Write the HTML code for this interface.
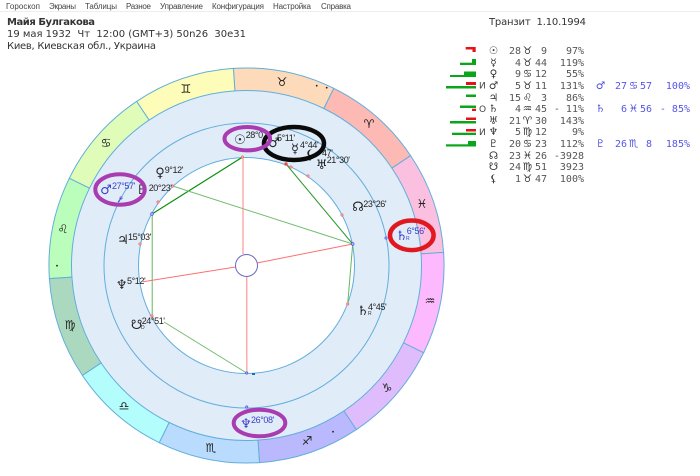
<!DOCTYPE html>
<html lang="ru"><head><meta charset="utf-8"><title>Майя Булгакова</title>
<style>
html,body{margin:0;padding:0;background:#fff;width:700px;height:476px;overflow:hidden}
svg{display:block;filter:blur(.3px)}
text{font-family:"Liberation Sans",sans-serif}
.m{font-size:8px;fill:#444}
.h{font-family:"DejaVu Sans",sans-serif;font-size:10px;fill:#333}
.z{font-family:"DejaVu Sans",sans-serif;font-size:12px;fill:#222;text-anchor:middle}
.g{font-family:"DejaVu Sans",sans-serif;font-size:13px;fill:#222;text-anchor:middle}
.gb{font-family:"DejaVu Sans",sans-serif;font-size:13px;fill:#3c3cc8;text-anchor:middle}
.l{font-size:9px;letter-spacing:-.4px;fill:#222}
.lb{font-size:9px;letter-spacing:-.4px;fill:#3c3cc8}
.r{font-size:5px;fill:#333}
.t text{font-family:"DejaVu Sans Mono",monospace;font-size:10px;fill:#555}
.t text.s{font-family:"DejaVu Sans",sans-serif;font-size:10.5px;text-anchor:middle;fill:#333}
.t text.e{text-anchor:end}
.b text{font-family:"DejaVu Sans Mono",monospace;font-size:10px;fill:#5555e8}
.b text.s{font-family:"DejaVu Sans",sans-serif;font-size:10.5px;text-anchor:middle;fill:#4a4ae0}
.b text.e{text-anchor:end}
</style></head><body>
<svg width="700" height="476" viewBox="0 0 700 476" xmlns="http://www.w3.org/2000/svg">
<rect width="700" height="476" fill="#fff"/>
<rect x="0" y="11" width="700" height="1" fill="#eee"/>
<text class="m" x="6" y="9" textLength="34">Гороскоп</text>
<text class="m" x="49" y="9" textLength="27">Экраны</text>
<text class="m" x="85" y="9" textLength="32">Таблицы</text>
<text class="m" x="126" y="9" textLength="25">Разное</text>
<text class="m" x="160" y="9" textLength="43">Управление</text>
<text class="m" x="212" y="9" textLength="52">Конфигурация</text>
<text class="m" x="273" y="9" textLength="38">Настройка</text>
<text class="m" x="321" y="9" textLength="30">Справка</text>

<text class="h" x="7" y="25" style="font-weight:700" textLength="88">Майя Булгакова</text>
<text class="h" x="7" y="37" xml:space="preserve" textLength="239">19 мая 1932  Чт  12:00 (GMT+3) 50n26  30e31</text>
<text class="h" x="7" y="49" textLength="149">Киев, Киевская обл., Украина</text>
<text class="h" x="489" y="25" xml:space="preserve" textLength="97">Транзит  1.10.1994</text>

<!-- zodiac wheel -->
<circle cx="246.5" cy="265.5" r="175" fill="#e1ecf9"/>
<g stroke="#62aedb" stroke-width="1">
<path fill="#fbbfdf" d="M443.6 252.4A197.5 197.5 0 0 0 410.6 155.6L391.9 168.1A175 175 0 0 1 421.1 253.9Z"/>
<path fill="#fdb9b3" d="M410.6 155.6A197.5 197.5 0 0 0 333.7 88.3L323.8 108.5A175 175 0 0 1 391.9 168.1Z"/>
<path fill="#fddbba" d="M333.7 88.3A197.5 197.5 0 0 0 233.4 68.4L234.9 90.9A175 175 0 0 1 323.8 108.5Z"/>
<path fill="#fdfdb9" d="M233.4 68.4A197.5 197.5 0 0 0 136.6 101.4L149.1 120.1A175 175 0 0 1 234.9 90.9Z"/>
<path fill="#dffdb9" d="M136.6 101.4A197.5 197.5 0 0 0 69.3 178.3L89.5 188.2A175 175 0 0 1 149.1 120.1Z"/>
<path fill="#bbfdbb" d="M69.3 178.3A197.5 197.5 0 0 0 49.4 278.6L71.9 277.1A175 175 0 0 1 89.5 188.2Z"/>
<path fill="#abd9bf" d="M49.4 278.6A197.5 197.5 0 0 0 82.4 375.4L101.1 362.9A175 175 0 0 1 71.9 277.1Z"/>
<path fill="#b3fdfd" d="M82.4 375.4A197.5 197.5 0 0 0 159.3 442.7L169.2 422.5A175 175 0 0 1 101.1 362.9Z"/>
<path fill="#b9dbfd" d="M159.3 442.7A197.5 197.5 0 0 0 259.6 462.6L258.1 440.1A175 175 0 0 1 169.2 422.5Z"/>
<path fill="#bbb9fd" d="M259.6 462.6A197.5 197.5 0 0 0 356.4 429.6L343.9 410.9A175 175 0 0 1 258.1 440.1Z"/>
<path fill="#dfbdfd" d="M356.4 429.6A197.5 197.5 0 0 0 423.7 352.7L403.5 342.8A175 175 0 0 1 343.9 410.9Z"/>
<path fill="#fdb9fd" d="M423.7 352.7A197.5 197.5 0 0 0 443.6 252.4L421.1 253.9A175 175 0 0 1 403.5 342.8Z"/>
</g>
<circle cx="246.5" cy="265.5" r="142.5" fill="none" stroke="#62aedb" stroke-width="1"/>
<circle cx="246.5" cy="265.5" r="108" fill="#fff" stroke="#62aedb" stroke-width="1"/>

<!-- aspects -->
<g fill="none">
<path d="M242.3 157.3L152 214" stroke="#0a8f0a" stroke-width="1.2"/>
<path d="M152.2 214V316" stroke="#60b860" stroke-width="1"/>
<path d="M164 322L246.7 373" stroke="#70bc70" stroke-width="1"/>
<path d="M352.7 244L286 164" stroke="#2f9a2f" stroke-width="1"/>
<path d="M352.7 244L172.7 186" stroke="#70bc70" stroke-width="1"/>
<path d="M352.7 244L347.7 304" stroke="#60b860" stroke-width="1"/>
<path d="M243 157V254" stroke="#ff8080" stroke-width="1"/>
<path d="M243 157V172" stroke="#ffb0b0" stroke-width="1.6"/>
<path d="M257 263L352.7 244" stroke="#ff7070" stroke-width="1"/>
<path d="M235.5 267L143 281.7" stroke="#ff7070" stroke-width="1"/>
<path d="M246.8 277V373" stroke="#ff8080" stroke-width="1"/>
<path d="M246.8 355V372" stroke="#ffb0b0" stroke-width="1.6"/>
</g>
<circle cx="246.5" cy="265.5" r="11" fill="#fff" stroke="#6a6ac0" stroke-width="1"/>

<!-- markers -->
<g fill="#ffb0b0" stroke="#f06060" stroke-width=".6">
<circle cx="158" cy="202" r="1.2"/><circle cx="172.7" cy="186" r="1.2"/><circle cx="140" cy="244" r="1.2"/><circle cx="152" cy="316" r="1.2"/>
<circle cx="291" cy="167" r="1.2"/><circle cx="308" cy="176" r="1.2"/><circle cx="342" cy="215" r="1.2"/><circle cx="347.7" cy="304" r="1.2"/>
<circle cx="286" cy="164" r="1.5" fill="#f04040"/><circle cx="242.5" cy="157" r="1.2"/>
</g>
<g fill="#aab0ff" stroke="#4a4ae0" stroke-width=".6">
<circle cx="352.7" cy="244" r="1.4"/><circle cx="152" cy="214" r="1.4"/><circle cx="246.7" cy="373" r="1.2"/>
<circle cx="121" cy="198" r="1.2"/><circle cx="386" cy="238" r="1.2"/><circle cx="246.7" cy="407" r="1.2"/>
</g>
<rect x="252" y="373" width="3" height="2" fill="#1b6fb5"/>

<!-- sign glyphs -->
<text class="z" x="186" y="93">♊</text>
<text class="z" x="282" y="86">♉</text>
<text class="z" x="369" y="128">♈</text>
<text class="z" x="422" y="208">♓</text>
<text class="z" x="430" y="305">♒</text>
<text class="z" x="387" y="392">♑</text>
<text class="z" x="307" y="445">♐</text>
<text class="z" x="211" y="452">♏</text>
<text class="z" x="124" y="410">♎</text>
<text class="z" x="70" y="329">♍</text>
<text class="z" x="63" y="233">♌</text>
<text class="z" x="106" y="147">♋</text>
<g fill="#222"><circle cx="316.7" cy="85.7" r=".9"/><circle cx="326.7" cy="87.7" r=".9"/><circle cx="333" cy="431.7" r=".9"/><circle cx="57" cy="265.7" r=".9"/></g>

<!-- natal planets -->
<text class="g" x="240" y="144">☉</text><text class="l" x="245.7" y="138">28°0</text>
<text class="g" x="274" y="147">♂</text><text class="l" x="277" y="141">5°11'</text>
<text class="g" x="295" y="153">☿</text><text class="l" x="300" y="148">4°44'</text>
<text class="g" x="310" y="159">⚸</text><text class="l" x="322" y="156">47'</text>
<text class="g" x="321.7" y="169">♅</text><text class="l" x="326.7" y="163">21°30'</text>
<text class="g" x="358" y="211">☊</text><text class="l" x="363.3" y="207">23°26'</text>
<text class="g" x="363" y="315">♄</text><text class="r" x="368" y="315">R</text><text class="l" x="368" y="310">4°45'</text>
<text class="g" x="160" y="177">♀</text><text class="l" x="164.7" y="173">9°12'</text>
<text class="g" x="142" y="194">♇</text><text class="l" x="148.7" y="191">20°23'</text>
<text class="g" x="123" y="244">♃</text><text class="l" x="128" y="240">15°03'</text>
<text class="g" x="121.7" y="289">♆</text><text class="l" x="127" y="284">5°12'</text>
<text class="g" x="136.7" y="329">☋</text><text class="r" x="141" y="329">D</text><text class="l" x="141.7" y="324">24°51'</text>

<!-- transit planets -->
<text class="gb" x="401.7" y="240">♄</text><text class="r" x="406" y="240" style="fill:#3c3cc8">R</text><text class="lb" x="406.7" y="234">6°56'</text>
<text class="gb" x="246" y="428">♆</text><text class="lb" x="251" y="423">26°08'</text>
<text class="gb" x="106" y="194">♂</text><text class="lb" x="112" y="189">27°57'</text>
<path d="M121 198L118 202" stroke="#3c3cc8" stroke-width=".8"/>

<!-- ellipses -->
<g fill="none">
<ellipse cx="294" cy="143.5" rx="30" ry="16.5" stroke="#0a0a0a" stroke-width="4.5"/>
<ellipse cx="247.3" cy="138.7" rx="22.8" ry="11.7" stroke="#a83cb0" stroke-width="4"/>
<ellipse cx="120" cy="189.5" rx="24.7" ry="15.2" stroke="#a83cb0" stroke-width="4"/>
<ellipse cx="259.5" cy="423" rx="25.8" ry="13.3" stroke="#a83cb0" stroke-width="4"/>
<ellipse cx="411.8" cy="235.3" rx="21.8" ry="14.8" stroke="#e0181f" stroke-width="4.5"/>
</g>

<!-- bars -->
<g fill="#e8101a">
<rect x="465.7" y="47" width="10" height="2.5"/><rect x="472.5" y="49.5" width="3.2" height="2.5"/>
<rect x="466" y="82" width="10" height="3"/><rect x="472" y="108.7" width="4" height="2.3"/>
<rect x="466" y="117.5" width="10" height="2.5"/><rect x="466" y="129" width="10" height="2.5"/>
</g>
<g fill="#0aa51a">
<rect x="460" y="62.7" width="16" height="2.3"/><rect x="472" y="59" width="4" height="4"/>
<rect x="450" y="75" width="26" height="2"/><rect x="464" y="71.5" width="12" height="3.5"/>
<rect x="446" y="86" width="30" height="2.5"/>
<rect x="466" y="94.5" width="10" height="2.5"/>
<rect x="460" y="105.5" width="16" height="2.5"/>
<rect x="450" y="121" width="26" height="2.5"/>
<rect x="452" y="132.7" width="24" height="2.3"/>
<rect x="446" y="144.3" width="30" height="2.2"/><rect x="468" y="141" width="8" height="3.5"/>
</g>
<text x="479" y="88.5" font-size="9" fill="#444" style="font-family:'DejaVu Sans',sans-serif">И</text>
<text x="479" y="112" font-size="9" fill="#444" style="font-family:'DejaVu Sans',sans-serif">О</text>
<text x="479" y="135" font-size="9" fill="#444" style="font-family:'DejaVu Sans',sans-serif">И</text>

<!-- table -->
<g class="t">
<text class="s" x="493.5" y="54">☉</text><text class="e" x="521" y="54">28</text><text class="s" x="527.5" y="54">♉</text><text class="e" x="547" y="54">9</text><text class="e" x="584" y="54">97%</text>
<text class="s" x="493.5" y="66">☿</text><text class="e" x="521" y="66">4</text><text class="s" x="527.5" y="66">♉</text><text class="e" x="547" y="66">44</text><text class="e" x="584" y="66">119%</text>
<text class="s" x="493.5" y="77">♀</text><text class="e" x="521" y="77">9</text><text class="s" x="527.5" y="77">♋</text><text class="e" x="547" y="77">12</text><text class="e" x="584" y="77">55%</text>
<text class="s" x="493.5" y="89">♂</text><text class="e" x="521" y="89">5</text><text class="s" x="527.5" y="89">♉</text><text class="e" x="547" y="89">11</text><text class="e" x="584" y="89">131%</text>
<text class="s" x="493.5" y="101">♃</text><text class="e" x="521" y="101">15</text><text class="s" x="527.5" y="101">♌</text><text class="e" x="547" y="101">3</text><text class="e" x="584" y="101">86%</text>
<text class="s" x="493.5" y="112">♄</text><text class="e" x="521" y="112">4</text><text class="s" x="527.5" y="112">♒</text><text class="e" x="547" y="112">45</text><text class="e" x="584" y="112" xml:space="preserve">- 11%</text>
<text class="s" x="493.5" y="124">♅</text><text class="e" x="521" y="124">21</text><text class="s" x="527.5" y="124">♈</text><text class="e" x="547" y="124">30</text><text class="e" x="584" y="124">143%</text>
<text class="s" x="493.5" y="135">♆</text><text class="e" x="521" y="135">5</text><text class="s" x="527.5" y="135">♍</text><text class="e" x="547" y="135">12</text><text class="e" x="584" y="135">9%</text>
<text class="s" x="493.5" y="147">♇</text><text class="e" x="521" y="147">20</text><text class="s" x="527.5" y="147">♋</text><text class="e" x="547" y="147">23</text><text class="e" x="584" y="147">112%</text>
<text class="s" x="493.5" y="159">☊</text><text class="e" x="521" y="159">23</text><text class="s" x="527.5" y="159">♓</text><text class="e" x="547" y="159">26</text><text class="e" x="584" y="159">-3928</text>
<text class="s" x="493.5" y="170">☋</text><text class="e" x="521" y="170">24</text><text class="s" x="527.5" y="170">♍</text><text class="e" x="547" y="170">51</text><text class="e" x="584" y="170">3923</text>
<text class="s" x="493.5" y="182">⚸</text><text class="e" x="521" y="182">1</text><text class="s" x="527.5" y="182">♉</text><text class="e" x="547" y="182">47</text><text class="e" x="584" y="182">100%</text>
</g>
<g class="b">
<text class="s" x="600.5" y="89">♂</text><text class="e" x="627" y="89">27</text><text class="s" x="633.5" y="89">♋</text><text class="e" x="652" y="89">57</text><text class="e" x="690" y="89">100%</text>
<text class="s" x="600.5" y="112">♄</text><text class="e" x="627" y="112">6</text><text class="s" x="633.5" y="112">♓</text><text class="e" x="652" y="112">56</text><text class="e" x="690" y="112">- 85%</text>
<text class="s" x="600.5" y="147">♇</text><text class="e" x="627" y="147">26</text><text class="s" x="633.5" y="147">♏</text><text class="e" x="652" y="147">8</text><text class="e" x="690" y="147">185%</text>
</g>
</svg>
</body></html>
